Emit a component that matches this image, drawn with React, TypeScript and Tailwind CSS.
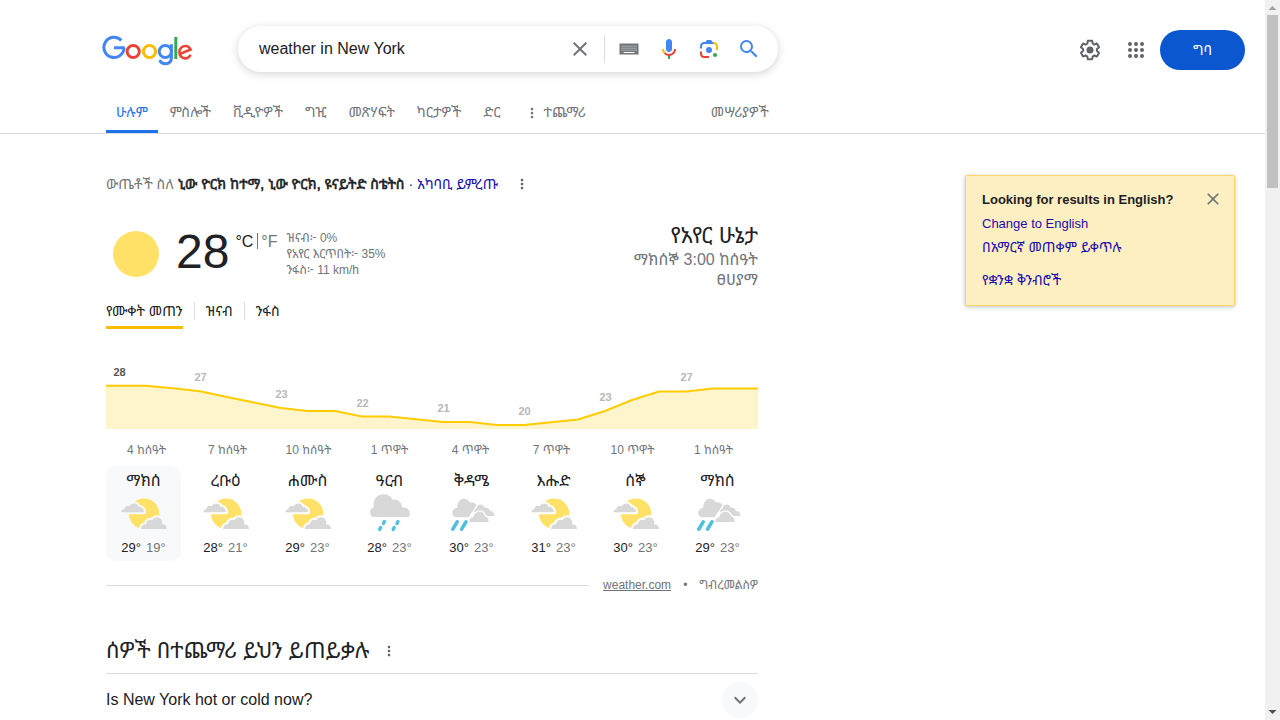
import type { ReactNode } from "react";

type Forecast = "partly" | "rain" | "showers";

const tabs = ["ምስሎች", "ቪዲዮዎች", "ግዢ", "መጽሃፍት", "ካርታዎች", "ድር"];

const hours = ["4 ከሰዓት", "7 ከሰዓት", "10 ከሰዓት", "1 ጥዋት", "4 ጥዋት", "7 ጥዋት", "10 ጥዋት", "1 ከሰዓት"];

const days: { name: string; icon: Forecast; high: number; low: number }[] = [
  { name: "ማክሰ", icon: "partly", high: 29, low: 19 },
  { name: "ረቡዕ", icon: "partly", high: 28, low: 21 },
  { name: "ሐሙስ", icon: "partly", high: 29, low: 23 },
  { name: "ዓርብ", icon: "rain", high: 28, low: 23 },
  { name: "ቅዳሜ", icon: "showers", high: 30, low: 23 },
  { name: "እሑድ", icon: "partly", high: 31, low: 23 },
  { name: "ሰኞ", icon: "partly", high: 30, low: 23 },
  { name: "ማክሰ", icon: "showers", high: 29, low: 23 },
];

const temps = [
  { x: 13, y: 26, t: 28 },
  { x: 94, y: 31, t: 27 },
  { x: 175, y: 48, t: 23 },
  { x: 256, y: 57, t: 22 },
  { x: 337, y: 62, t: 21 },
  { x: 418, y: 65, t: 20 },
  { x: 499, y: 51, t: 23 },
  { x: 580, y: 31, t: 27 },
];

const curve =
  "0,35.8 40,35.8 67,38.3 94,41.3 121,47 148,52.5 175,58 202,61 229,61 256,66.5 283,66.5 310,69.3 337,72 364,72 391,75 418,75 445,72.2 472,69.5 499,61 526,50 553,41.5 580,41.5 607,38.5 652,38.5";

function Logo() {
  return (
    <svg width="92" height="32" viewBox="0 0 92 32" fill="none" strokeWidth="3" role="img" aria-label="Google">
      <path stroke="#4285f4" d="M19.3 6.4A10.1 10.1 0 1 0 22.1 13.8M12 13.7h10.7" />
      <circle stroke="#ea4335" cx="31.2" cy="17.5" r="6.1" />
      <circle stroke="#fbbc05" cx="47.5" cy="17.5" r="6.1" />
      <circle stroke="#4285f4" cx="63.3" cy="17.5" r="6.1" />
      <path stroke="#4285f4" d="M69.4 10.3v13.2c0 4.2-2.4 6.3-6 6.3-2.7 0-4.7-1.3-5.7-3.7" />
      <path stroke="#34a853" d="M73.8 3v22" />
      <path stroke="#ea4335" strokeWidth="2.6" d="M78.8 19.6l9.8-4.1A5.900 6.200 0 1 0 88.600 20.800" />
    </svg>
  );
}

function Icon({ d, size = 24, className = "" }: { d: string; size?: number; className?: string }) {
  return (
    <svg width={size} height={size} viewBox="0 0 24 24" fill="currentColor" className={className} aria-hidden="true">
      <path d={d} />
    </svg>
  );
}

const CLOSE =
  "M19 6.41L17.59 5 12 10.59 6.41 5 5 6.41 10.59 12 5 17.59 6.41 19 12 13.41 17.59 19 19 17.59 13.41 12z";
const SEARCH =
  "M15.5 14h-.79l-.28-.27A6.471 6.471 0 0 0 16 9.5 6.5 6.5 0 1 0 9.5 16c1.61 0 3.09-.59 4.23-1.57l.27.28v.79l5 4.99L20.49 19l-4.99-5zm-6 0C7.01 14 5 11.99 5 9.5S7.01 5 9.5 5 14 7.01 14 9.5 11.99 14 9.5 14z";
const DOTS =
  "M12 8c1.1 0 2-.9 2-2s-.9-2-2-2-2 .9-2 2 .9 2 2 2zm0 2c-1.1 0-2 .9-2 2s.9 2 2 2 2-.9 2-2-.9-2-2-2zm0 6c-1.1 0-2 .9-2 2s.9 2 2 2 2-.9 2-2-.9-2-2-2z";
const CHEVRON = "M7.41 8.59 12 13.17l4.59-4.58L18 10l-6 6-6-6z";
const GEAR =
  "M13.85 22.25h-3.7c-.74 0-1.36-.54-1.45-1.27l-.27-1.89c-.27-.14-.53-.29-.79-.46l-1.8.72c-.7.26-1.47-.03-1.81-.65L2.2 15.53c-.35-.66-.2-1.44.36-1.88l1.53-1.19c-.01-.15-.02-.3-.02-.46 0-.15.01-.31.02-.46l-1.52-1.19c-.59-.45-.74-1.26-.37-1.88l1.85-3.19c.34-.62 1.11-.9 1.79-.63l1.81.73c.26-.17.52-.32.78-.46l.27-1.91c.09-.7.71-1.25 1.44-1.25h3.7c.74 0 1.36.54 1.45 1.27l.27 1.89c.27.14.53.29.79.46l1.8-.72c.71-.26 1.48.03 1.82.65l1.84 3.18c.36.66.2 1.44-.36 1.88l-1.52 1.19c.01.15.02.3.02.46s-.01.31-.02.46l1.52 1.19c.56.45.72 1.23.37 1.86l-1.86 3.22c-.34.62-1.11.9-1.8.63l-1.8-.72c-.26.17-.52.32-.78.46l-.27 1.91c-.1.68-.72 1.22-1.46 1.22zm-3.23-2h2.76l.37-2.55.53-.22c.44-.18.88-.44 1.34-.78l.45-.34 2.38.96 1.38-2.4-2.03-1.58.07-.56c.03-.26.06-.51.06-.78s-.03-.53-.06-.78l-.07-.56 2.03-1.58-1.39-2.4-2.39.96-.45-.35c-.42-.32-.87-.58-1.33-.77l-.52-.22-.37-2.55h-2.76l-.37 2.55-.53.21c-.44.19-.88.44-1.34.79l-.45.33-2.38-.95-1.39 2.39 2.03 1.58-.07.56a7 7 0 0 0-.06.79c0 .26.02.53.06.78l.07.56-2.03 1.58 1.38 2.4 2.39-.96.45.35c.43.33.86.58 1.33.77l.53.22.38 2.55z";

function Gear() {
  return (
    <svg width="24" height="24" viewBox="0 0 24 24" fill="currentColor" aria-hidden="true">
      <path d={GEAR} />
      <circle cx="12" cy="12" r="3.5" />
    </svg>
  );
}

function Keyboard() {
  return (
    <svg width="20" height="12" viewBox="0 0 20 12" aria-hidden="true">
      <path fill="#70757a" d="M0.5 0.5h19v11h-19z" />
      <path stroke="#fff" strokeWidth="0.8" strokeDasharray="1 1" d="M2.500 3.200h15.500M2.500 5.200h15.500M2.500 7.200h15.500" />
      <path stroke="#fff" strokeWidth="1" d="M4.5 9.5h11" />
    </svg>
  );
}

function Mic() {
  return (
    <svg width="24" height="24" viewBox="0 0 24 24" aria-hidden="true">
      <path fill="#4285f4" d="m12 15c1.66 0 3-1.31 3-2.97v-7.02c0-1.66-1.34-3.01-3-3.01s-3 1.34-3 3.01v7.02c0 1.66 1.34 2.97 3 2.97z" />
      <path fill="#34a853" d="m11 18.08h2v3.92h-2z" />
      <path fill="#fbbc04" d="m7.05 16.87c-1.27-1.33-2.05-2.83-2.05-4.87h2c0 1.45 0.56 2.42 1.47 3.38v0.32l-1.15 1.18z" />
      <path fill="#ea4335" d="m12 16.93a4.97 5.25 0 0 1 -3.54 -1.55l-1.41 1.49c1.26 1.34 3.02 2.13 4.95 2.13 3.87 0 6.99-2.92 6.99-7h-1.99c0 2.92-2.24 4.93-5 4.93z" />
    </svg>
  );
}

function Lens() {
  return (
    <svg width="24" height="24" viewBox="0 0 192 192" aria-hidden="true">
      <circle fill="#34a853" cx="144" cy="144" r="16" />
      <circle fill="#4285f4" cx="96" cy="104" r="24" />
      <path fill="#ea4335" d="M24,135.2c0,18.11,14.69,32.8,32.8,32.8H96v-16l-40.1-0.1c-8.8,0-15.9-8.19-15.9-17.9v-18H24V135.2z" />
      <path fill="#fbbc04" d="M168,72.8c0-18.11-14.69-32.8-32.8-32.8H116l20,16c8.8,0,16,8.29,16,18v30h16V72.8z" />
      <path fill="#4285f4" d="M112,24l-32,0L68,40H56.8C38.69,40,24,54.69,24,72.8V92h16V74c0-9.71,7.2-18,16-18h80L112,24z" />
    </svg>
  );
}

function Apps() {
  return (
    <svg width="24" height="24" viewBox="0 0 24 24" fill="#5f6368" aria-hidden="true">
      {[6, 12, 18].map((y) => [6, 12, 18].map((x) => <circle key={`${x}-${y}`} cx={x} cy={y} r="2" />))}
    </svg>
  );
}

function WeatherIcon({ kind, halo }: { kind: Forecast; halo: string }) {
  if (kind === "partly") {
    return (
      <svg width="48" height="48" viewBox="0 0 48 48" role="img" aria-label="Partly cloudy">
        <circle cx="24.2" cy="23.8" r="15.2" fill="#ffe168" />
        <g fill="#d8d8d8" stroke={halo} strokeWidth="4" strokeLinejoin="round" paintOrder="stroke">
          <path d="M1.3 22.3c.2-1.8 1.4-3 3-3 .2-3 3.4-4.5 5.4-3 2-4 7.8-3.5 8.8.4 3-.2 5.500 2 5.500 5.600z" />
          <path d="M21 39c.2-3.2 2.3-5 5-4.8.4-3.8 3.6-5.4 6.2-4 2.6-4.5 9-3.2 9.8.9.4 1.1.2 2 .1 3.3 2.6-.4 4.9 1.6 4.9 4.6z" />
        </g>
      </svg>
    );
  }
  if (kind === "rain") {
    return (
      <svg width="48" height="48" viewBox="0 0 48 48" role="img" aria-label="Rain">
        <path
          fill="#d8d8d8"
          d="M6.5 27c-3.5-2.5-3.2-8.800 1.300-9.700C6.500 9.500 11 4.300 17.700 4.300c4.300 0 7.400 2 8.800 5.400 5.500-1.300 9.800 2.800 9.400 7.600 4.500-.5 7.800 2.200 7.800 5.900 0 1.500-.3 2.800-.8 3.800z"
        />
        <path
          stroke="#4fc0de"
          strokeWidth="3.4"
          strokeLinecap="round"
          d="M18.4 31.500l-1 2M14.600 37.600l-1 2M32 31.500l-1 2M28.200 37.600l-1 2"
        />
      </svg>
    );
  }
  return (
    <svg width="48" height="48" viewBox="0 0 48 48" role="img" aria-label="Scattered showers">
      <g fill="#d8d8d8">
        <path d="M25.500 22c.5-2.500 2-3.600 3.100-3.600.5-2.900 2.200-3.900 3.900-3.900 2.100 0 3.500 1.200 4 3 3.200-.3 5 1.300 5.300 3.400 2.800-.2 4.700 1.900 4.700 4.800-2 .5-6 .3-9 0z" />
        <path
          stroke={halo}
          strokeWidth="2.4"
          paintOrder="stroke"
          d="M21.2 32c0-3.3 2-4.8 4.2-4.700.3-3.400 2.900-5.600 6-5.600 3 0 5.100 2 5.400 4.600 2.500.2 4 2.500 3.800 5.700z"
        />
        <path
          stroke={halo}
          strokeWidth="2"
          paintOrder="stroke"
          d="M7.500 27.300c-4.500-1.600-4.800-8.300 1.800-9.500-.3-5.200 2.700-9.100 6.400-9.100 3.100 0 5.100 1.400 6 3.700 2.700-.7 5.800.5 6.900 2.800-1.500 1.800-2.200 3-2.900 4.900-2 3-4 4.200-4.700 7.200z"
        />
      </g>
      <path stroke="#4fc0de" strokeWidth="3.6" strokeLinecap="round" d="M9.200 31.800l-4.400 7.400M18 31.800l-4.400 7.400" />
    </svg>
  );
}

function MoreButton({ label, size = 16 }: { label: string; size?: number }) {
  return (
    <button type="button" aria-label={label} className="flex items-center text-[#5f6368]">
      <Icon d={DOTS} size={size} />
    </button>
  );
}

function TabLink({ children }: { children: ReactNode }) {
  return (
    <a href="#tab" className="px-[10px] text-[#70757a]">
      {children}
    </a>
  );
}

function Header() {
  return (
    <header className="border-b border-[#dadce0]">
      <div className="flex items-center pt-[26px] pr-5 pl-[102px]">
        <a href="#home" className="mr-[44px] shrink-0 pt-[2px]">
          <Logo />
        </a>
        <form className="flex h-[46px] min-w-0 shrink basis-[540px] items-center rounded-full bg-white pr-[17px] pl-[21px] shadow-[0_2px_7px_1px_rgba(64,60,67,0.18)]">
          <input
            type="text"
            aria-label="Search"
            defaultValue="weather in New York"
            className="min-w-0 flex-1 bg-transparent text-base text-[#202124] outline-none"
          />
          <button type="button" aria-label="Clear" className="mr-3 text-[#70757a]">
            <Icon d={CLOSE} />
          </button>
          <div className="flex h-7 items-center gap-4 border-l border-[#dadce0] pl-[14px]">
            <button type="button" aria-label="Keyboard">
              <Keyboard />
            </button>
            <button type="button" aria-label="Voice search" className="ml-[2px]">
              <Mic />
            </button>
            <button type="button" aria-label="Image search">
              <Lens />
            </button>
            <button type="submit" aria-label="Submit" className="text-[#4285f4]">
              <Icon d={SEARCH} />
            </button>
          </div>
        </form>
        <div className="ml-auto flex items-center pt-[2px]">
          <button type="button" aria-label="Settings" className="mr-[22px] text-[#5f6368]">
            <Gear />
          </button>
          <button type="button" aria-label="Apps" className="mr-3">
            <Apps />
          </button>
          <button type="button" className="h-10 w-[85px] rounded-full bg-[#0b57d0] text-sm text-white">
            ግባ
          </button>
        </div>
      </div>
      <nav className="mt-5 flex h-[41px] pl-[106px] text-sm leading-[41px]">
        <a href="#all" className="border-b-[3px] border-[#1a73e8] px-[10px] text-[#1a73e8]">
          ሁሉም
        </a>
        <div className="ml-[2px] flex gap-[2px]">
          {tabs.map((t) => (
            <TabLink key={t}>{t}</TabLink>
          ))}
          <button type="button" className="ml-3 flex items-center gap-[3px] text-[#70757a]">
            <Icon d={DOTS} size={16} />
            ተጨማሪ
          </button>
        </div>
        <button type="button" className="ml-[125px] text-[#70757a]">
          መሣሪያዎች
        </button>
      </nav>
    </header>
  );
}

function Chart() {
  return (
    <svg viewBox="0 0 652 79" className="mt-[21px] block w-full" role="img" aria-label="Temperature by hour">
      <polygon points={`${curve} 652,79 0,79`} fill="#fff5cc" />
      <polyline points={curve} fill="none" stroke="#fc0" strokeWidth="2" />
      {temps.map(({ x, y, t }, i) => (
        <text key={x} x={x + 0.5} y={y} textAnchor="middle" fontSize="11" fontWeight="bold" fill={i === 0 ? "#555" : "#b8b8b8"}>
          {t}
        </text>
      ))}
    </svg>
  );
}

function Weather() {
  return (
    <section>
      <div className="mt-7 flex h-[66px] justify-between">
        <div className="flex">
          <svg width="60" height="60" viewBox="0 0 60 60" className="mt-[2px]" role="img" aria-label="Sunny">
            <circle cx="30" cy="30" r="23" fill="#ffe168" />
          </svg>
          <div className="ml-[10px] text-5xl leading-[60px] text-[#202124]">28</div>
          <div className="ml-[6px] flex items-start pt-2 text-base text-[#70757a]">
            <span className="text-[#202124]">°C</span>
            <span className="mr-[3px] ml-1 mt-[3px] h-4 w-px bg-[#70757a]" />
            <a href="#fahrenheit">°F</a>
          </div>
          <div className="ml-[9px] pt-2 text-xs leading-4 text-[#70757a]">
            <div>ዝናብ፦ 0%</div>
            <div>የአየር እርጥበት፦ 35%</div>
            <div>ንፋስ፦ 11 km/h</div>
          </div>
        </div>
        <div className="text-right text-base leading-5 text-[#70757a]">
          <h2 className="text-[22px] leading-7 text-[#202124]">የአየር ሁኔታ</h2>
          <div>ማክሰኞ 3:00 ከሰዓት</div>
          <div>ፀሀያማ</div>
        </div>
      </div>
      <div className="mt-[14px] flex h-[27px] items-start text-sm leading-[18px] text-[#202124]">
        <button type="button" className="border-b-[3px] border-[#fbbc04] pb-[6px]">
          የሙቀት መጠን
        </button>
        <button type="button" className="ml-[11px] border-l border-[#dadce0] pl-[11px]">
          ዝናብ
        </button>
        <button type="button" className="ml-[11px] border-l border-[#dadce0] pl-[11px]">
          ንፋስ
        </button>
      </div>
      <Chart />
      <div className="mt-3 grid w-[648px] grid-cols-8 text-center text-xs leading-[18px] text-[#70757a]">
        {hours.map((h) => (
          <div key={h}>{h}</div>
        ))}
      </div>
      <div className="mt-[7px] grid w-[649px] grid-cols-8 gap-[7px]">
        {days.map((d, i) => (
          <button
            type="button"
            key={i}
            className={`flex h-[95px] flex-col items-center rounded-[10px] pt-[6px] ${i === 0 ? "bg-[#f8f9fa]" : ""}`}
          >
            <span className="text-base leading-[18px] text-[#202124]">{d.name}</span>
            <span className="ml-[1px] block">
              <WeatherIcon kind={d.icon} halo={i === 0 ? "#f8f9fa" : "#fff"} />
            </span>
            <span className="flex gap-[5px] text-[13px] leading-5 text-[#70757a]">
              <span className="text-[#202124]">{d.high}°</span>
              <span>{d.low}°</span>
            </span>
          </button>
        ))}
      </div>
      <div className="mt-4 flex h-4 items-center text-xs text-[#70757a]">
        <span className="mr-[14px] h-px flex-1 bg-[#dadce0]" />
        <a href="#source" className="underline">
          weather.com
        </a>
        <span className="mx-3">•</span>
        <a href="#feedback">ግብረመልስዎ</a>
      </div>
    </section>
  );
}

function LanguagePrompt() {
  return (
    <aside className="mt-[41px] mr-[30px] ml-auto h-[131px] w-[270px] shrink-0 rounded-[2px] border border-[#fdd663] bg-[#feefc3] px-4 pt-4 text-[13px] text-[#1a0dab] shadow-[0_1px_4px_rgba(0,0,0,0.25)]">
      <div className="flex items-center justify-between leading-4">
        <b className="text-[#202124]">Looking for results in English?</b>
        <button type="button" aria-label="Close" className="-mr-[5px] text-[#70757a]">
          <Icon d={CLOSE} size={20} className="-mt-[3px] -mb-[1px]" />
        </button>
      </div>
      <div className="mt-1 flex flex-col items-start leading-6">
        <a href="#english">Change to English</a>
        <a href="#amharic" className="text-sm leading-[22px]">
          በአማርኛ መጠቀም ይቀጥሉ
        </a>
        <a href="#settings" className="mt-[11px] text-sm leading-[22px]">
          የቋንቋ ቅንብሮች
        </a>
      </div>
    </aside>
  );
}

function Scrollbar() {
  return (
    <div className="flex w-[15px] shrink-0 flex-col items-center justify-between bg-[#f1f1f1]" aria-hidden="true">
      <div className="flex flex-col items-center">
        <svg width="15" height="15" viewBox="0 0 15 15" fill="#a3a3a3">
          <path d="M3.5 10h8l-4-4z" />
        </svg>
        <div className="h-[173px] w-[11px] bg-[#c1c1c1]" />
      </div>
      <svg width="15" height="15" viewBox="0 0 15 15" fill="#505050">
        <path d="M3.5 5h8l-4 4z" />
      </svg>
    </div>
  );
}

export default function App() {
  return (
    <div className="flex h-screen overflow-hidden bg-white font-['Liberation_Sans',Arial,'Noto_Sans_Ethiopic','Droid_Sans_Ethiopic','Droid_Sans_Fallback','Abyssinica_SIL','Noto_Serif_Ethiopic',sans-serif]">
      <div className="min-w-0 flex-1">
        <Header />
        <div className="flex items-start">
          <main className="ml-[106px] w-[652px]">
            <div className="mt-10 flex h-5 items-center text-sm leading-5 text-[#70757a]">
              <span>
                ውጤቶች ስለ{" "}
                <b className="font-normal text-[#202124] [-webkit-text-stroke:0.6px_#202124]">
                  ኒው ዮርክ ከተማ, ኒው ዮርክ, ዩናይትድ ስቴትስ
                </b>
                <a href="#location" className="text-[#1a0dab]">
                  {" "}
                  · አካባቢ ይምረጡ
                </a>
              </span>
              <span className="ml-4">
                <MoreButton label="Location options" />
              </span>
            </div>
            <Weather />
            <section className="mt-9">
              <div className="flex h-[45px] items-center border-b border-[#dadce0]">
                <h2 className="text-[22px] leading-7 text-[#202124]">ሰዎች በተጨማሪ ይህን ይጠይቃሉ</h2>
                <span className="ml-3">
                  <MoreButton label="About these questions" />
                </span>
              </div>
              <button type="button" className="flex w-full items-center justify-between py-2 text-base text-[#202124]">
                Is New York hot or cold now?
                <span className="flex size-9 items-center justify-center rounded-full bg-[#f8f9fa] text-[#70757a]">
                  <Icon d={CHEVRON} />
                </span>
              </button>
            </section>
          </main>
          <LanguagePrompt />
        </div>
      </div>
      <Scrollbar />
    </div>
  );
}
